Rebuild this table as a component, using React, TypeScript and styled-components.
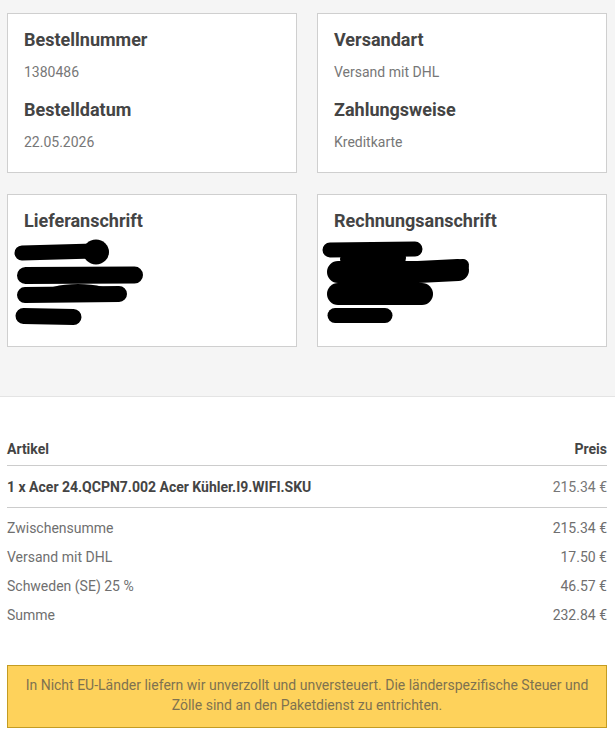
import styled, { createGlobalStyle } from "styled-components";

const GlobalStyle = createGlobalStyle`
  html, body {
    margin: 0;
    padding: 0;
    background: #ffffff;
    font-family: Roboto, "Liberation Sans", Arial, sans-serif;
    -webkit-font-smoothing: antialiased;
  }
`;

const Page = styled.div`
  width: 615px;
  min-height: 745px;
  background: #ffffff;
`;

const InfoSection = styled.section`
  background: #f5f5f5;
  border-bottom: 1px solid #e4e4e4;
  padding: 13px 8px 49px 7px;
  display: grid;
  grid-template-columns: 1fr 1fr;
  column-gap: 20px;
  row-gap: 21px;
`;

const Card = styled.div`
  background: #ffffff;
  border: 1px solid #cfcfcf;
  padding: 15px 16px 20px;
  box-sizing: border-box;
`;

const CardTitle = styled.h3`
  margin: 0 0 11px;
  font-size: 18px;
  line-height: 22px;
  font-weight: 700;
  color: #444444;
`;

const CardValue = styled.p<{ $last?: boolean }>`
  margin: 0 0 ${(p) => (p.$last ? "0" : "17px")};
  font-size: 14px;
  line-height: 20px;
  color: #777777;
`;

const Redaction = styled.svg`
  display: block;
  margin: -11px 0 0 -16px;
  width: 200px;
  height: 94px;
`;

const OrderSection = styled.section`
  padding: 42px 8px 0 7px;
`;

const TableRow = styled.div<{ $head?: boolean }>`
  display: flex;
  justify-content: space-between;
  align-items: baseline;
  font-size: 14px;
  line-height: 20px;
  border-bottom: 1px solid #cccccc;
  padding: ${(p) => (p.$head ? "0 0 6px" : "11px 0 10px")};
`;

const Strong = styled.span`
  font-weight: 700;
  color: #444444;
`;

const Price = styled.span`
  color: #777777;
`;

const Totals = styled.div`
  display: flex;
  flex-direction: column;
  gap: 9px;
  padding-top: 10px;
`;

const TotalRow = styled.div`
  display: flex;
  justify-content: space-between;
  font-size: 14px;
  line-height: 20px;
  color: #6f6f6f;
`;

const Notice = styled.div`
  margin: 40px 8px 0 7px;
  background: #fed25b;
  border: 1px solid #c49c22;
  padding: 9px 16px 12px;
  text-align: center;
  font-size: 14px;
  line-height: 20px;
  color: #7e7250;
`;

const DeliveryScribble = () => (
  <Redaction viewBox="0 0 200 94">
    <g stroke="#000" strokeLinecap="round" fill="none">
      <path d="M14 21 L86 19" strokeWidth="15" />
      <path d="M17.5 43.5 L126.5 43" strokeWidth="17" />
      <path d="M17 63 L111 62" strokeWidth="16" />
      <path d="M15.5 84 L65.5 85" strokeWidth="16" />
    </g>
    <ellipse cx="88" cy="20" rx="13" ry="12.5" fill="#000" />
    <ellipse cx="70" cy="61" rx="34" ry="9" fill="#000" />
  </Redaction>
);

const BillingScribble = () => (
  <Redaction viewBox="0 0 200 94">
    <g stroke="#000" strokeLinecap="round" fill="none">
      <path d="M12 18 L97 17" strokeWidth="15" />
      <path d="M30 27 L80 26" strokeWidth="16" />
      <path d="M20 40 L100 40 L140 38" strokeWidth="22" />
      <path d="M100 39 L145 33" strokeWidth="12" />
      <path d="M20 62 L104 62" strokeWidth="22" />
      <path d="M17 83.5 L67 83.5" strokeWidth="15" />
    </g>
  </Redaction>
);

const totals = [
  { label: "Zwischensumme", value: "215.34 €" },
  { label: "Versand mit DHL", value: "17.50 €" },
  { label: "Schweden (SE) 25 %", value: "46.57 €" },
  { label: "Summe", value: "232.84 €" },
];

export default function App() {
  return (
    <Page>
      <GlobalStyle />
      <InfoSection>
        <Card>
          <CardTitle>Bestellnummer</CardTitle>
          <CardValue>1380486</CardValue>
          <CardTitle>Bestelldatum</CardTitle>
          <CardValue $last>22.05.2026</CardValue>
        </Card>
        <Card>
          <CardTitle>Versandart</CardTitle>
          <CardValue>Versand mit DHL</CardValue>
          <CardTitle>Zahlungsweise</CardTitle>
          <CardValue $last>Kreditkarte</CardValue>
        </Card>
        <Card>
          <CardTitle>Lieferanschrift</CardTitle>
          <DeliveryScribble />
        </Card>
        <Card>
          <CardTitle>Rechnungsanschrift</CardTitle>
          <BillingScribble />
        </Card>
      </InfoSection>

      <OrderSection>
        <TableRow $head>
          <Strong>Artikel</Strong>
          <Strong>Preis</Strong>
        </TableRow>
        <TableRow>
          <Strong>1 x Acer 24.QCPN7.002 Acer Kühler.I9.WIFI.SKU</Strong>
          <Price>215.34 €</Price>
        </TableRow>
        <Totals>
          {totals.map((t) => (
            <TotalRow key={t.label}>
              <span>{t.label}</span>
              <span>{t.value}</span>
            </TotalRow>
          ))}
        </Totals>
      </OrderSection>

      <Notice>
        In Nicht EU-Länder liefern wir unverzollt und unversteuert. Die
        länderspezifische Steuer und Zölle sind an den Paketdienst zu
        entrichten.
      </Notice>
    </Page>
  );
}
